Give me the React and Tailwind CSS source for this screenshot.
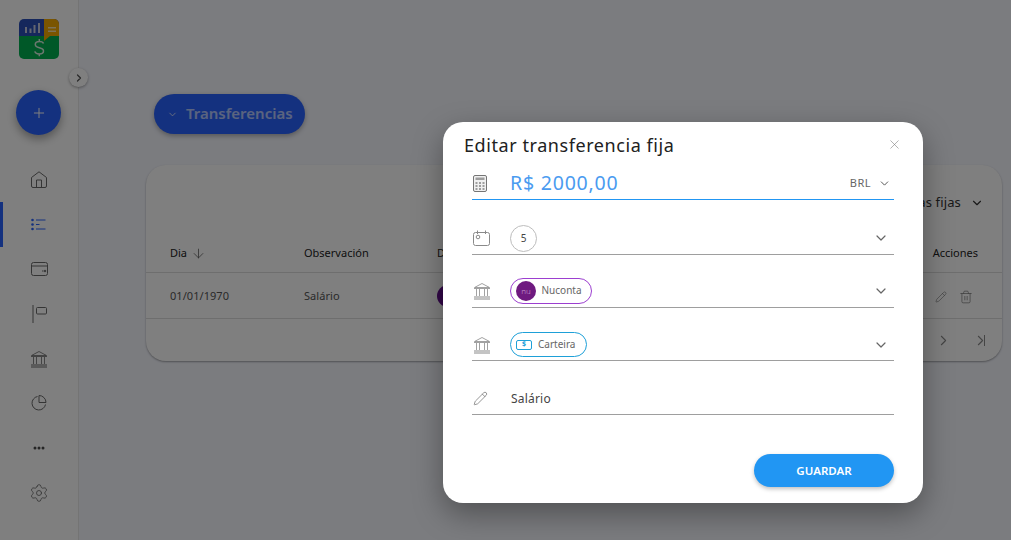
import { ChevronDown, ChevronRight, ArrowDown, Plus, X, Pencil, Trash2, Settings } from 'lucide-react';

const font = "font-['Noto_Sans',sans-serif]";

function Logo() {
  return (
    <svg width="40" height="40" viewBox="0 0 40 40">
      <defs>
        <clipPath id="logoClip">
          <rect width="40" height="40" rx="5" />
        </clipPath>
      </defs>
      <g clipPath="url(#logoClip)">
        <rect width="40" height="18" fill="#2a4fb8" />
        <rect x="25" width="15" height="18" fill="#f5ab00" />
        <rect y="17" width="40" height="23" fill="#00b050" />
        <path d="M25 17h6l-6 5z" fill="#f5ab00" />
        <path d="M6 14V8h2v6zM10.500 14V9.500h2V14zM14.500 14V6h2v8zM19 14V4h2v10z" fill="#c6cbe0" />
        <path d="M29 8h8v1.500h-8zM29 11.500h8V13h-8z" fill="#f8e5ae" />
      </g>
      <path d="M24.500 24.500c-.5-1.500-2-2-4-2-2.500 0-4.200 1-4.200 3s1.700 2.700 4 3.200c2.300.5 4.200 1 4.200 3.200 0 2-1.800 3-4.300 3-2.200 0-4-.8-4.400-2.500M20.300 20v2.500M20.300 34.900v2.300" fill="none" stroke="#d8efe0" strokeWidth="1.500" />
    </svg>
  );
}

function BankIcon({ className }) {
  return (
    <svg className={className} width="18" height="18" viewBox="0 0 18 18" fill="none" stroke="currentColor" strokeWidth="0.800">
      <path d="M1.500 5.500 9 1.500l7.500 4z" />
      <path d="M1 6.500h16M3.500 7v7M6.500 7v7M11.500 7v7M14.500 7v7" />
      <path d="M1 15h16M1 17h16" strokeWidth="1.200" />
    </svg>
  );
}

function CalculatorIcon() {
  return (
    <svg width="14" height="17" viewBox="0 0 14 17" fill="none" stroke="#757575" strokeWidth="1">
      <rect x=".5" y=".5" width="13" height="16" rx="1.500" fill="#f0f0f0" />
      <rect x="2.500" y="2.500" width="9" height="2.500" fill="#9e9e9e" stroke="none" />
      <path d="M2.500 7h2v2h-2zM6 7h2v2H6zM9.500 7h2v2h-2zM2.500 10h2v2h-2zM6 10h2v2H6zM9.500 10h2v2h-2zM2.500 13h2v2h-2zM6 13h2v2H6zM9.500 13h2v2h-2z" fill="#9e9e9e" stroke="none" />
    </svg>
  );
}

function CalendarIcon() {
  return (
    <svg width="18" height="16" viewBox="0 0 18 16" fill="none" stroke="#8a8a8a" strokeWidth="1">
      <rect x=".5" y="2.500" width="16" height="13" rx="2" />
      <path d="M4.500 .5v3.500M12.500 .5v3.500" />
      <circle cx="5" cy="7" r="1.800" />
    </svg>
  );
}

function HomeIcon() {
  return (
    <svg width="16" height="17" viewBox="0 0 16 17" fill="none" stroke="#6a6a6a" strokeWidth="1">
      <path d="M.5 6.500 8 .8l7.500 5.700v8.500a1.500 1.500 0 0 1-1.500 1.500H2a1.500 1.500 0 0 1-1.500-1.500z" />
      <path d="M5.500 16.500V9h5v7.500" />
    </svg>
  );
}

function WalletIcon() {
  return (
    <svg width="17" height="14" viewBox="0 0 17 14" fill="none" stroke="#6a6a6a" strokeWidth="1">
      <rect x=".5" y=".5" width="16" height="13" rx="2" />
      <path d="M.5 4h16" />
      <path d="M11 9h1.500" />
      <circle cx="14" cy="9" r=".8" fill="#6a6a6a" />
    </svg>
  );
}

function FlagIcon() {
  return (
    <svg width="15" height="18" viewBox="0 0 15 18" fill="none" stroke="#6a6a6a" strokeWidth="1">
      <path d="M1 0v18" />
      <rect x="4.500" y="2.500" width="10" height="6.500" rx="1" />
    </svg>
  );
}

function PieIcon() {
  return (
    <svg width="16" height="16" viewBox="0 0 16 16" fill="none" stroke="#6a6a6a" strokeWidth="1">
      <path d="M6.500 1.500a6.800 6.800 0 1 0 8 8" />
      <path d="M8 .5a7 7 0 0 1 7 7H8z" />
    </svg>
  );
}

function ListIcon() {
  return (
    <svg width="16" height="13" viewBox="0 0 16 13" fill="none" stroke="#2962ff" strokeWidth="1">
      <circle cx="1.500" cy="2" r="1.300" fill="#2962ff" stroke="none" />
      <circle cx="1.500" cy="6.500" r="1.300" fill="#2962ff" stroke="none" />
      <circle cx="1.500" cy="11" r="1.300" fill="#2962ff" stroke="none" />
      <path d="M5 2h9.500M5 6.500h3.500M5 11h9.500" />
    </svg>
  );
}

function DotsIcon() {
  return (
    <svg width="12" height="4" viewBox="0 0 12 4" fill="#4a4a4a">
      <circle cx="2" cy="2" r="1.500" />
      <circle cx="6" cy="2" r="1.500" />
      <circle cx="10" cy="2" r="1.500" />
    </svg>
  );
}

function NavItem({ children, active }) {
  return (
    <div className="relative flex h-[44.700px] w-full items-center justify-center">
      {active && <span className="absolute left-0 top-0 h-full w-[3px] bg-[#2962ff]" />}
      {children}
    </div>
  );
}

function Sidebar() {
  return (
    <aside className="relative flex h-full w-[79px] shrink-0 flex-col items-center border-r border-[#e8e8e8] bg-white">
      <div className="mt-[19px] -ml-[1px] h-[40px]">
        <Logo />
      </div>
      <button className="absolute left-[69px] top-[68px] flex h-[19px] w-[19px] items-center justify-center rounded-full bg-white shadow-[0_1px_3px_rgba(0,0,0,0.35)]">
        <ChevronRight size={12} strokeWidth={2.500} className="text-[#555]" />
      </button>
      <button className="mt-[31px] -ml-[1px] flex h-[45px] w-[45px] items-center justify-center rounded-full bg-[#2962ff] shadow-[0_4px_10px_rgba(0,0,0,0.35)]">
        <Plus size={16} strokeWidth={1.500} className="text-white" />
      </button>
      <nav className="mt-[22.500px] flex w-full flex-col">
        <NavItem>
          <HomeIcon />
        </NavItem>
        <NavItem active>
          <ListIcon />
        </NavItem>
        <NavItem>
          <WalletIcon />
        </NavItem>
        <NavItem>
          <FlagIcon />
        </NavItem>
        <NavItem>
          <BankIcon className="text-[#6a6a6a]" />
        </NavItem>
        <NavItem>
          <PieIcon />
        </NavItem>
        <NavItem>
          <DotsIcon />
        </NavItem>
        <NavItem>
          <Settings size={20} strokeWidth={1} className="text-[#6a6a6a]" />
        </NavItem>
      </nav>
    </aside>
  );
}

function Content() {
  return (
    <main className="min-w-0 flex-1 pl-[67px] pr-[9px] pt-[94px]">
      <div className="ml-[8px] flex h-[40px] w-[151px] items-center gap-[8px] rounded-[20px] bg-[#2962ff] pl-[13px] shadow-[0_2px_5px_rgba(0,0,0,0.3)]">
        <ChevronDown size={11} strokeWidth={2} className="text-white/80" />
        <span className="-mt-[1px] text-[15px] font-semibold tracking-[0px] text-white/65">Transferencias</span>
      </div>
      <section className="mt-[31px] h-[196px] overflow-hidden rounded-[20px] bg-white shadow-[0_1px_2px_rgba(0,0,0,0.35)]">
        <div className="flex h-[70px] items-center justify-end pr-[18px] pt-[6px]">
          <span className="text-[13px] tracking-[0.15px] text-[#333]">Transferencias fijas</span>
          <ChevronDown size={14} strokeWidth={2} className="ml-[9px] text-[#333]" />
        </div>
        <div className="flex h-[38px] items-center border-b border-[#dddddd] pl-[24px] pr-[24px] text-[11px] text-[#222]">
          <span className="flex w-[134px] items-center gap-[4px]">
            Dia <ArrowDown size={15} strokeWidth={1.200} className="text-[#555]" />
          </span>
          <span className="w-[133px]">Observación</span>
          <span>Destino</span>
          <span className="ml-auto">Acciones</span>
        </div>
        <div className="flex h-[46px] items-center border-b border-[#dddddd] pl-[24px] pr-[29px] text-[11px] tracking-[0.05px] text-[#555]">
          <span className="w-[134px] pt-[2px]">01/01/1970</span>
          <span className="w-[133px] pt-[2px]">Salário</span>
          <span className="h-[22px] w-[22px] rounded-full bg-[#650f90]" />
          <span className="ml-auto flex items-center gap-[12px] pt-[2px] text-[#777]">
            <Pencil size={12} strokeWidth={1.200} />
            <Trash2 size={14} strokeWidth={1.200} />
          </span>
        </div>
        <div className="flex h-[42px] items-center justify-end gap-[20px] pr-[17px] text-[#8a8a8a]">
          <ChevronRight size={17} strokeWidth={1.500} />
          <span className="flex items-center">
            <ChevronRight size={17} strokeWidth={1.500} className="-mr-[5px]" />
            <span className="h-[11px] w-[1.500px] bg-[#8a8a8a]" />
          </span>
        </div>
      </section>
    </main>
  );
}

function FieldRow({ icon, children, right, className, lineClass = 'border-[#9e9e9e]' }) {
  return (
    <div className={`flex items-center border-b ${lineClass} ${className}`}>
      <div className="flex w-[38px] shrink-0 items-center pl-[1px]">{icon}</div>
      <div className="min-w-0 flex-1">{children}</div>
      {right}
    </div>
  );
}

function RowChevron() {
  return <ChevronDown size={16} strokeWidth={1.800} className="mr-[5px] text-[#666]" />;
}

function Modal() {
  return (
    <div className="absolute inset-0 flex items-start bg-black/50 pl-[443px] pt-[122px]">
      <div className={`flex h-[381px] w-[480px] flex-col rounded-[20px] bg-white px-[29px] shadow-[0_11px_30px_rgba(0,0,0,0.35)] ${font}`}>
        <div className="flex h-[46px] items-start justify-between pt-[10px]">
          <h2 className="-ml-[8px] text-[18px] font-normal leading-[26px] tracking-[0.57px] text-[#212121]">Editar transferencia fija</h2>
          <X size={15} strokeWidth={0.900} className="-mr-[8px] mt-[5px] text-[#777]" />
        </div>
        <FieldRow
          icon={<CalculatorIcon />}
          lineClass="border-[#2196f3]"
          className="h-[32px]"
          right={
            <div className="mr-[3px] flex items-center gap-[7px] text-[11px] tracking-[0.5px] text-[#666]">
              BRL
              <ChevronDown size={13} strokeWidth={1.800} className="text-[#555]" />
            </div>
          }
        >
          <span className="text-[19.500px] leading-none tracking-[0.8px] text-[#4a9bf0]">R$ 2000,00</span>
        </FieldRow>
        <FieldRow icon={<CalendarIcon />} right={<RowChevron />} className="mt-[22px] h-[33px]">
          <span className="flex h-[27px] w-[27px] items-center justify-center rounded-full border border-[#bdbdbd] text-[10px] text-[#444]">5</span>
        </FieldRow>
        <FieldRow icon={<BankIcon className="text-[#8a8a8a]" />} right={<RowChevron />} className="mt-[20px] h-[33px]">
          <span className="flex h-[26px] w-[82px] items-center gap-[5.500px] rounded-[13px] border border-[#9c3fd0] pl-[5px] text-[10px] text-[#666]">
            <span className="flex h-[20px] w-[20px] items-center justify-center rounded-full bg-[#6f1a80] text-[8px] font-light text-[#c79ad1]">nu</span>
            <span className="-mt-[1px]">Nuconta</span>
          </span>
        </FieldRow>
        <FieldRow icon={<BankIcon className="text-[#8a8a8a]" />} right={<RowChevron />} className="mt-[21px] h-[32px]">
          <span className="flex h-[25px] w-[77px] items-center gap-[6px] rounded-[13px] border border-[#1ea0d8] pl-[5px] text-[10px] text-[#666]">
            <span className="flex h-[10px] w-[16px] items-center justify-center rounded-[2px] border border-[#1ea0d8] text-[7px] font-bold text-[#1ea0d8]">$</span>
            Carteira
          </span>
        </FieldRow>
        <FieldRow icon={<Pencil size={15} strokeWidth={1.100} className="text-[#666]" />} className="mt-[21px] h-[33px]">
          <span className="relative -top-[1px] ml-[1px] text-[12px] tracking-[0.2px] text-[#444]">Salário</span>
        </FieldRow>
        <button className="ml-auto mt-[39px] h-[33px] w-[140px] rounded-[17px] bg-[#2196f3] pt-[1px] text-[11.500px] font-semibold text-white shadow-[0_2px_4px_rgba(0,0,0,0.25)]">
          GUARDAR
        </button>
      </div>
    </div>
  );
}

export default function App() {
  return (
    <div className={`relative flex h-screen w-full overflow-hidden bg-[#f6f8ff] ${font}`}>
      <Sidebar />
      <Content />
      <Modal />
    </div>
  );
}
